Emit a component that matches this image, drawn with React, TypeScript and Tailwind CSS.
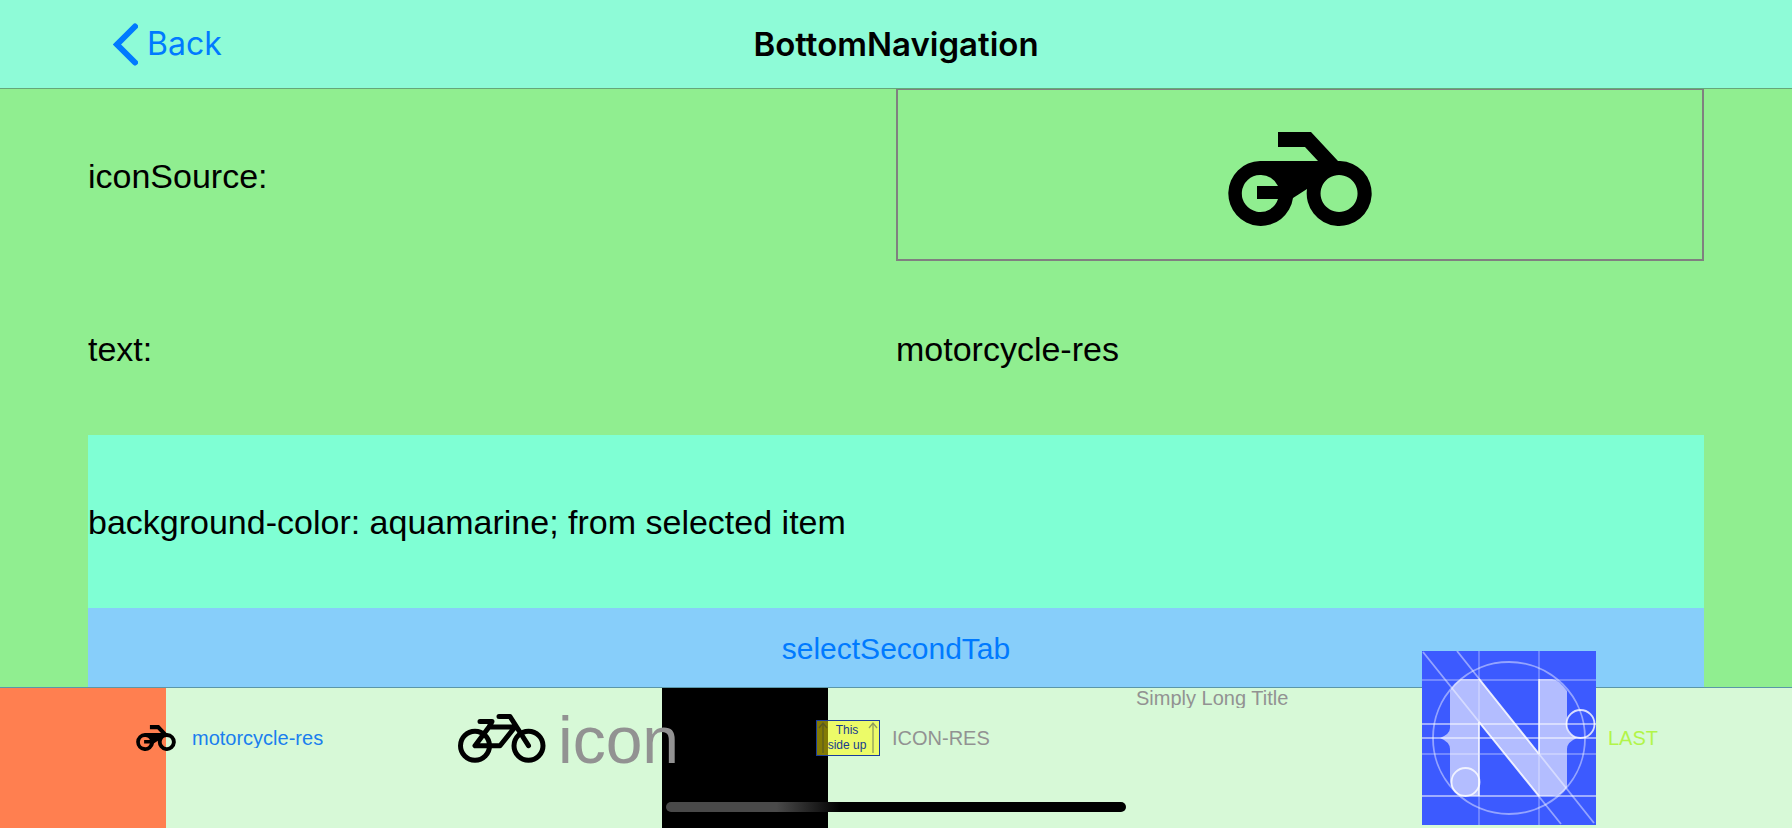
import React from "react";

function Motorcycle({ className }: { className: string }) {
  return (
    <svg viewBox="0 0 144 94" className={className} aria-hidden="true">
      <path d="M50 0H83L110 29H90L77 15H50Z" />
      <path
        fillRule="evenodd"
        d="M32 29H112A32.500 32.500 0 1 1 79 57L65 66A32.500 32.500 0 1 1 32 29ZM32 43A18.500 18.500 0 1 0 50 67H29V54H50A18.500 18.500 0 0 0 32 43ZM111 43A18.500 18.500 0 1 0 111.100 43Z"
      />
    </svg>
  );
}

function Bicycle({ className }: { className: string }) {
  return (
    <svg
      viewBox="0 0 88 49"
      className={className}
      fill="none"
      stroke="currentColor"
      strokeWidth="5"
      strokeLinecap="round"
      strokeLinejoin="round"
      aria-hidden="true"
    >
      <circle cx="17" cy="31.700" r="14.500" />
      <circle cx="70.500" cy="31.700" r="14.500" />
      <path d="M22 7.500H34L31 13L17 31.700H42L57 13H33M41 2.500H52L70.500 31.700" />
    </svg>
  );
}

function ThisSideUp() {
  return (
    <span className="relative flex h-9 w-16 shrink-0 flex-col items-center justify-center border border-[#1a3c9c] bg-[#ecfb68] pr-0.5 text-center text-[12px] leading-[15px] text-[#173a8f]">
      <span className="absolute inset-y-0 left-0 w-[11px] bg-[#827a05]" />
      <svg
        viewBox="0 0 62 34"
        className="absolute inset-0 h-full w-full"
        fill="none"
        strokeWidth="1.300"
        aria-hidden="true"
      >
        <path stroke="#5c5c20" d="M6 32V3M2 7L6 2L10 7" />
        <path stroke="#8f9d5c" d="M56 32V3M52 7L56 2L60 7" />
      </svg>
      <span className="relative">This</span>
      <span className="relative">side up</span>
    </span>
  );
}

function Blueprint({ className }: { className: string }) {
  return (
    <svg viewBox="0 0 174 174" className={className} fill="none" aria-hidden="true">
      <rect width="174" height="174" fill="#3c5aff" />
      <path
        fill="#b3bdff"
        d="M39 28H57L117 103V28H130Q136 28 145 40V77Q145 83 155 87Q145 91 145 98V136Q140 145 130 145H117L57 71V145H38Q28 138 28 130V98Q28 91 18 87Q28 83 28 77V40Q32 32 39 28Z"
      />
      <g stroke="#fff" strokeWidth="1.800">
        <path strokeOpacity=".28" d="M57 0V174M117 0V174M0 29H174M0 103H174" />
        <path strokeOpacity=".5" d="M0 73H174M0 87H174M0 145H174" />
        <path strokeOpacity=".45" d="M1 1L139 173M35 0L172 172" />
        <circle strokeOpacity=".45" cx="87" cy="87" r="76" />
        <path strokeOpacity=".75" d="M57 71V145M117 28V103M57 28L117 103M57 71L117 145" />
        <circle strokeOpacity=".8" cx="158.500" cy="73" r="14" />
        <circle strokeOpacity=".8" cx="43.500" cy="131" r="14" />
      </g>
    </svg>
  );
}

export default function App() {
  return (
    <div className="flex h-screen flex-col overflow-hidden bg-[#90ee90] font-['Liberation_Sans',Arial,sans-serif] text-black">
      <header className="grid h-[89px] shrink-0 grid-cols-[1fr_auto_1fr] items-center border-b border-[#65a878] bg-[#8efbd7] px-[113px] font-['Inter',sans-serif]">
        <button type="button" className="flex items-center gap-[9px] justify-self-start text-[32px] leading-10 text-[#007aff]">
          <svg viewBox="0 0 25 43" className="h-[43px] w-[25px]" fill="none" aria-hidden="true">
            <path d="M22 3.500L4 21.500L22 39.500" stroke="currentColor" strokeWidth="6" strokeLinecap="round" />
          </svg>
          Back
        </button>
        <h1 className="text-[33px] font-semibold leading-10">BottomNavigation</h1>
      </header>

      <main className="min-h-0 flex-1 overflow-hidden px-[88px] text-[34px] leading-10">
        <dl className="grid grid-cols-2 items-start">
          <dt className="flex h-[173px] items-center">iconSource:</dt>
          <dd className="flex h-[172px] items-center justify-center border-2 border-t border-[#808080] pt-2">
            <Motorcycle className="h-[94px] w-36" />
          </dd>
          <dt className="flex h-[173px] items-center">text:</dt>
          <dd className="flex h-[173px] items-center">motorcycle-res</dd>
        </dl>
        <p className="flex h-[173px] items-center bg-[#7fffd4]">background-color: aquamarine; from selected item</p>
        <button type="button" className="h-[82px] w-full bg-[#87cefa] text-[30px] text-[#007aff]">
          selectSecondTab
        </button>
      </main>

      <nav className="relative grid h-[141px] shrink-0 grid-cols-[458fr_204fr_474fr_286fr_370fr] border-t border-[#5a97a8] bg-[#d7f9d7] text-[20px] leading-5 text-[#929292]">
        <button type="button" className="flex h-[100px] min-w-0 items-center text-[#1a7fee]">
          <span className="h-[140px] w-[166px] shrink-0 self-start bg-[#ff7f50]" />
          <span className="-ml-[30px] flex items-center gap-4">
            <Motorcycle className="h-[26px] w-10 text-black" />
            <span className="overflow-hidden">motorcycle-res</span>
          </span>
        </button>
        <button type="button" className="relative z-10 flex h-[100px] min-w-0 items-center gap-3 text-[66px]">
          <Bicycle className="h-[49px] w-[88px] shrink-0 text-black" />
          <span className="pt-1 leading-[72px]">icon</span>
        </button>
        <button type="button" className="flex h-[100px] min-w-0 items-center">
          <span className="h-[140px] w-[166px] shrink-0 self-start bg-black" />
          <span className="-ml-3 flex items-center gap-3">
            <ThisSideUp />
            <span>ICON-RES</span>
          </span>
        </button>
        <button type="button" className="min-w-0 self-start overflow-hidden text-left">
          Simply Long Title
        </button>
        <button type="button" className="flex h-[100px] min-w-0 items-center gap-3 text-[#b2f549]">
          <Blueprint className="h-[174px] w-[174px] shrink-0" />
          <span>LAST</span>
        </button>
        <span className="absolute bottom-[16px] left-1/2 z-20 h-[10px] w-[460px] -translate-x-1/2 rounded-full bg-[linear-gradient(90deg,#4a4a4a_0%,#4a4a4a_24%,#000_38%)]" />
      </nav>
    </div>
  );
}
